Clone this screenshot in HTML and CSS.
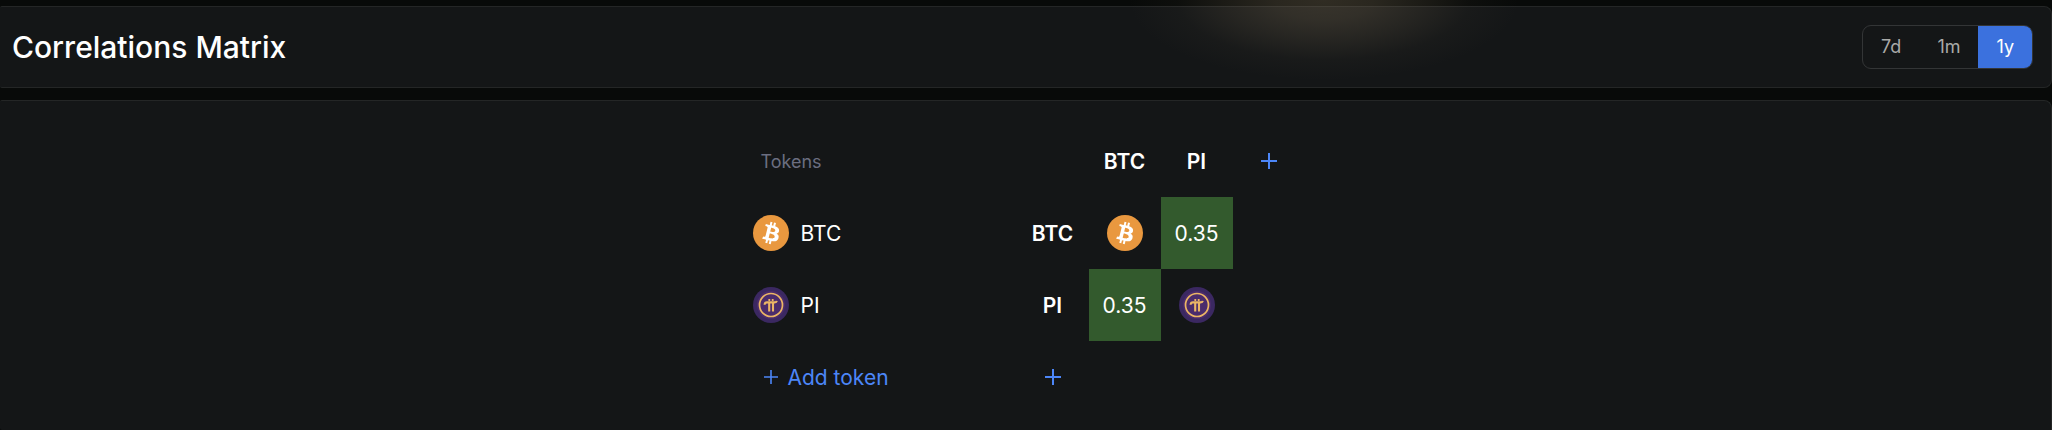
FILE: index.html
```html
<!DOCTYPE html>
<html lang="en">
<head>
    <meta charset="UTF-8">
    <meta name="viewport" content="width=device-width, initial-scale=1.0">
    <title>Correlations Matrix</title>
    <link rel="stylesheet" href="styles.css">
</head>
<body>
    <!-- shared token icons -->
    <svg class="sprite" aria-hidden="true">
        <symbol id="btc" viewBox="0 0 32 32">
            <circle cx="16" cy="16" r="16" fill="#e9983f"/>
            <path fill="#fff" d="M23.19 14.02c.31-2.1-1.28-3.22-3.47-3.98l.71-2.84-1.73-.43-.69 2.77c-.46-.11-.92-.22-1.39-.33l.7-2.78-1.73-.43-.71 2.84c-.38-.09-.75-.17-1.1-.26l-2.39-.6-.46 1.85s1.28.3 1.26.31c.7.18.83.64.81 1.01l-.81 3.24c.05.01.11.03.18.06l-.18-.05-1.13 4.53c-.09.21-.3.53-.79.41.02.03-1.26-.31-1.26-.31l-.86 1.99 2.25.56c.42.1.83.21 1.23.31l-.72 2.88 1.73.43.71-2.84c.47.13.93.24 1.38.36l-.71 2.83 1.73.43.72-2.87c2.95.56 5.17.33 6.1-2.33.75-2.15-.04-3.39-1.59-4.2 1.13-.26 1.98-1 2.21-2.53zm-3.95 5.54c-.53 2.15-4.15.99-5.32.7l.95-3.81c1.17.29 4.93.87 4.37 3.11zm.54-5.57c-.49 1.96-3.5.96-4.48.72l.86-3.46c.98.24 4.12.7 3.62 2.74z"/>
        </symbol>
        <symbol id="pi" viewBox="0 0 36 36">
            <circle cx="18" cy="18" r="18" fill="#3b2861"/>
            <circle cx="18" cy="18" r="14" fill="#4b2c6c"/>
            <circle cx="18" cy="18" r="11.5" fill="none" stroke="#ecb665" stroke-width="1.7"/>
            <path fill="none" stroke="#ecb665" stroke-width="2.1" d="M11.6 17.8c.1-1.8 1-2.4 2.4-2.4h7.6c1.3 0 2-.3 2.2-1.5M16.2 15.4v9M20 15.4v9"/>
            <path fill="none" stroke="#ecb665" stroke-width="1.8" d="M16.3 12v2M19.7 12v2"/>
        </symbol>
        <symbol id="plus" viewBox="0 0 16 16">
            <path fill="none" stroke="currentColor" stroke-width="2" d="M8 0v16M0 8h16"/>
        </symbol>
        <symbol id="plus-thin" viewBox="0 0 16 16">
            <path fill="none" stroke="currentColor" stroke-width="1.6" d="M8 1v14M1 8h14"/>
        </symbol>
    </svg>

    <header class="card card-header">
        <h1>Correlations Matrix</h1>
        <div class="periods">
            <button type="button">7d</button>
            <button type="button">1m</button>
            <button type="button" class="active">1y</button>
        </div>
    </header>

    <main class="card card-body">
        <table class="matrix">
            <tr>
                <th class="token label">Tokens</th>
                <td></td>
                <th>BTC</th>
                <th>PI</th>
                <td><button type="button" class="add" aria-label="Add column"><svg class="plus"><use href="#plus"/></svg></button></td>
            </tr>
            <tr>
                <td class="token"><div class="name"><svg class="coin"><use href="#btc"/></svg>BTC</div></td>
                <th>BTC</th>
                <td><svg class="coin"><use href="#btc"/></svg></td>
                <td class="positive">0.35</td>
                <td></td>
            </tr>
            <tr>
                <td class="token"><div class="name"><svg class="coin"><use href="#pi"/></svg>PI</div></td>
                <th>PI</th>
                <td class="positive">0.35</td>
                <td><svg class="coin"><use href="#pi"/></svg></td>
                <td></td>
            </tr>
            <tr>
                <td class="token"><button type="button" class="add add-token"><svg class="plus"><use href="#plus-thin"/></svg>Add token</button></td>
                <td><button type="button" class="add" aria-label="Add row"><svg class="plus"><use href="#plus"/></svg></button></td>
                <td></td>
                <td></td>
                <td></td>
            </tr>
        </table>
    </main>
</body>
</html>
```

FILE: styles.css
```css
/* page styles */
* {
    box-sizing: border-box;
}

body {
    margin: 0;
    padding-top: 6px;
    min-height: 100vh;
    display: flex;
    flex-direction: column;
    gap: 12px;
    background-color: #080a09;
    color: #FFFFFF;
    font-family: Inter, "Liberation Sans", sans-serif;
    font-size: 21px;
}

/* warm glow coming down from above the header */
body::before {
    content: "";
    position: absolute;
    top: 0;
    left: 55%;
    width: 390px;
    height: 80px;
    background: radial-gradient(ellipse 50% 100% at 50% 0, rgba(120, 106, 82, 0.36), rgba(120, 106, 82, 0.3) 25%, rgba(120, 106, 82, 0.18) 50%, rgba(120, 106, 82, 0.05) 75%, rgba(120, 106, 82, 0));
    pointer-events: none;
}

.sprite {
    position: absolute;
    width: 0;
    height: 0;
}

.card {
    background-color: #141617;
    border: 1px solid #242626;
    border-left: none;
    border-radius: 2px 8px 8px 2px;
}

.card-header {
    display: flex;
    align-items: center;
    justify-content: space-between;
    padding: 18px 18px 18px 12px;
}

.card-body {
    flex: 1;
    padding: 24px 0 16px;
    border-bottom: none;
    border-bottom-right-radius: 0;
}

h1 {
    margin: 0;
    font-size: 30px;
    line-height: 36px;
    font-weight: 500;
}

button {
    background: none;
    border: none;
    padding: 0;
    font: inherit;
    cursor: pointer;
}

/* period switch */
.periods {
    display: flex;
    border: 1px solid #333536;
    border-radius: 9px;
    overflow: hidden;
}

.periods button {
    padding: 0 18px;
    font-size: 18px;
    line-height: 42px;
    color: #a9aaa8;
}

.periods .active {
    background-color: #3b71de;
    color: #FFFFFF;
}

/* matrix */
.matrix {
    margin: 0 auto;
    border-collapse: collapse;
    table-layout: fixed;
    width: 558px;
}

.matrix th,
.matrix td {
    width: 72px;
    height: 72px;
    padding: 0;
    text-align: center;
}

.matrix th {
    font-weight: 600;
}

.matrix .token {
    width: 270px;
    padding-left: 6px;
    text-align: left;
}

.matrix .label {
    padding-left: 14px;
    font-size: 18px;
    font-weight: 400;
    color: #6b6e80;
}

.matrix .positive {
    background-color: #335a2d;
}

.name {
    display: flex;
    align-items: center;
    gap: 12px;
}

.coin {
    display: block;
    width: 36px;
    height: 36px;
    margin: 0 auto;
}

.name .coin {
    margin: 0;
}

.add {
    color: #4c86f8;
}

.plus {
    display: block;
    width: 16px;
    height: 16px;
}

.add-token {
    display: flex;
    align-items: center;
    gap: 9px;
    padding-left: 10px;
}
```
